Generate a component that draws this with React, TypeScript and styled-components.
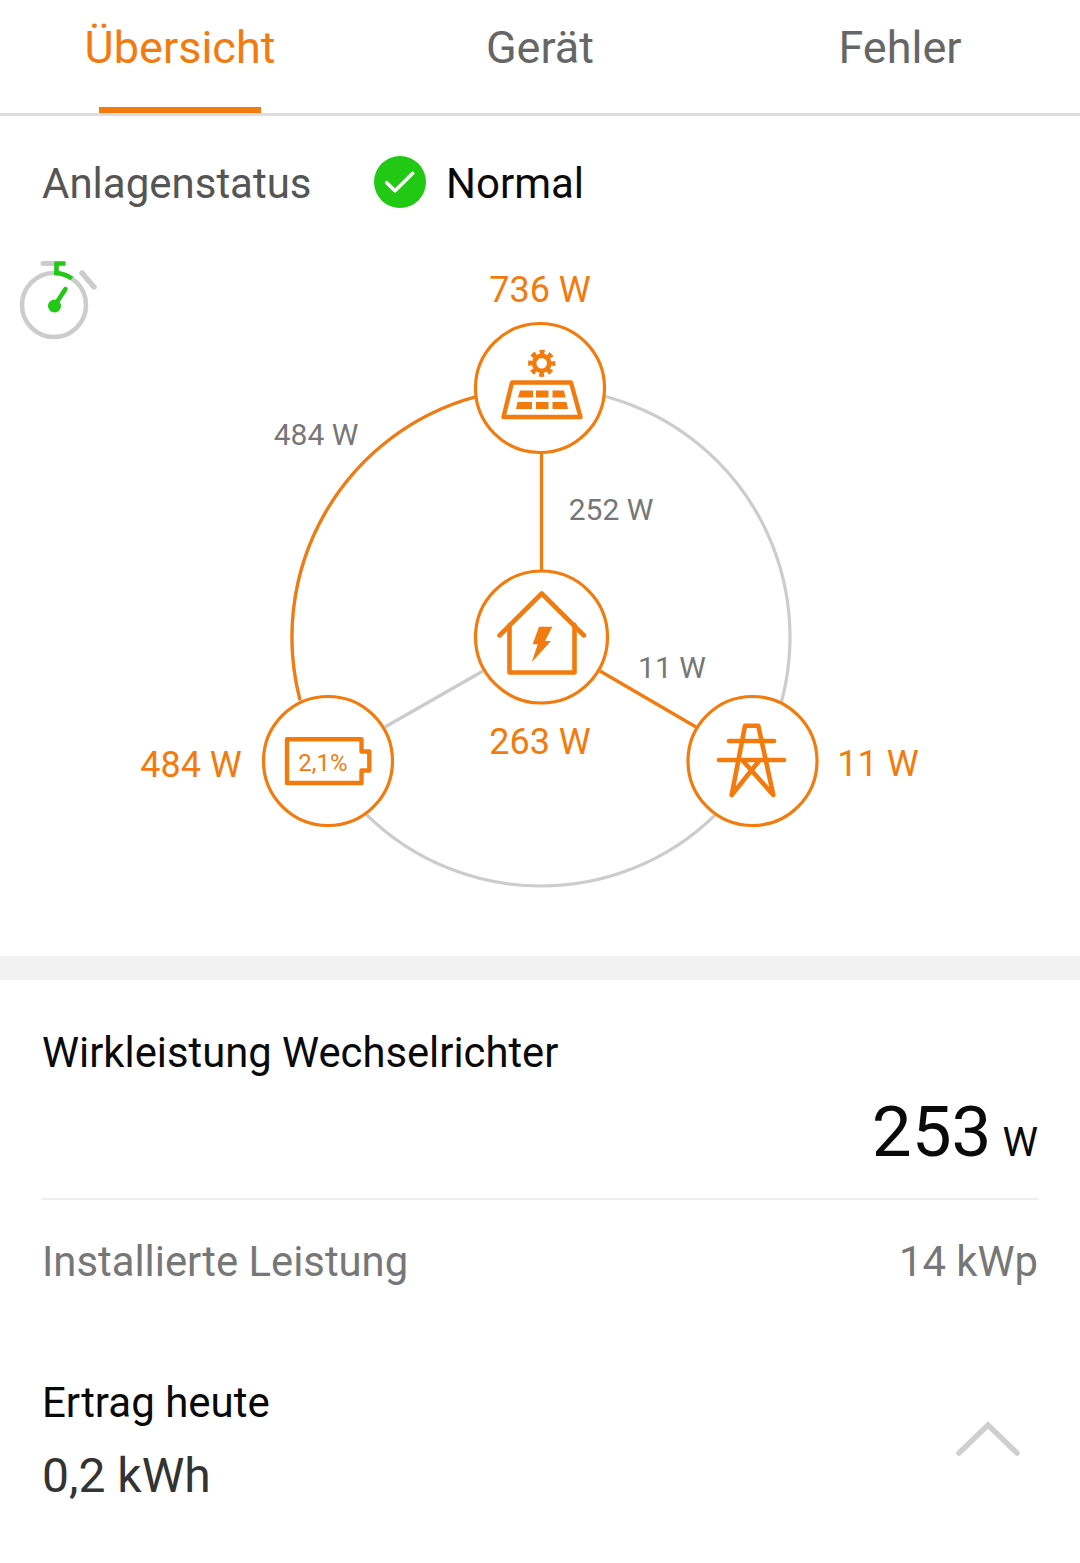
import * as React from 'react';
import styled, { createGlobalStyle } from 'styled-components';

const ORANGE = '#f37b0e';
const GREEN = '#21c814';
const GRAY_LINE = '#cccccc';

const GlobalStyle = createGlobalStyle`
  html, body {
    margin: 0;
    padding: 0;
    background: #fff;
    font-family: Roboto, "Noto Sans", sans-serif;
  }
`;

const Page = styled.div`
  width: 1080px;
  height: 1563px;
  overflow: hidden;
  background: #fff;
`;

/*************************************************************************/

const TabBar = styled.div`
  display: grid;
  grid-template-columns: repeat(3, 1fr);
  height: 113px;
  border-bottom: 3px solid #dddddd;
`;

const Tab = styled.div<{ $active?: boolean }>`
  display: flex;
  justify-content: center;
  position: relative;
  padding-top: 22px;
  font-size: 45px;
  line-height: 52px;
  color: ${p => (p.$active ? ORANGE : '#666666')};
`;

const TabMark = styled.div`
  position: absolute;
  left: 99px;
  bottom: 0;
  width: 162px;
  height: 6px;
  background: ${ORANGE};
`;

const StatusRow = styled.div`
  display: flex;
  align-items: center;
  height: 134px;
  padding-left: 42px;
`;

const StatusLabel = styled.div`
  font-size: 42px;
  color: #555555;
  width: 332px;
`;

const StatusBadge = styled.svg`
  display: block;
  width: 52px;
  height: 52px;
  margin-top: -2px;
`;

const StatusValue = styled.div`
  font-size: 42px;
  color: #0a0a0a;
  margin-left: 20px;
`;

const Diagram = styled.div`
  position: relative;
  height: 706px;
`;

const DiagramArt = styled.svg`
  display: block;
  width: 1080px;
  height: 706px;
`;

// value labels sit on the drawing, so they are placed by page coordinates
const FlowLabel = styled.div<{ $x: number; $y: number; $node?: boolean }>`
  position: absolute;
  left: ${p => p.$x}px;
  top: ${p => p.$y - 250 - 19}px;
  height: 40px;
  line-height: 40px;
  transform: translateX(-50%);
  white-space: nowrap;
  font-size: ${p => (p.$node ? 36 : 30)}px;
  color: ${p => (p.$node ? ORANGE : '#777777')};
`;

const Band = styled.div`
  height: 24px;
  background: #f2f2f2;
`;

const Details = styled.div`
  padding: 0 42px;
`;

const PowerTitle = styled.div`
  padding-top: 48px;
  font-size: 41.75px;
  line-height: 50px;
  color: #0a0a0a;
`;

const PowerValue = styled.div`
  display: flex;
  justify-content: flex-end;
  align-items: baseline;
  gap: 11px;
  height: 120px;
  line-height: 108px;
  font-size: 71px;
  color: #0a0a0a;
  border-bottom: 2px solid #eeeeee;
`;

const PowerUnit = styled.span`
  font-size: 40px;
`;

const InfoRow = styled.div`
  display: flex;
  justify-content: space-between;
  padding-top: 37px;
  font-size: 41.8px;
  line-height: 50px;
  color: #777777;
`;

const YieldRow = styled.div`
  display: flex;
  justify-content: space-between;
  align-items: center;
  padding-top: 91px;
`;

const YieldTitle = styled.div`
  font-size: 42px;
  line-height: 50px;
  color: #0a0a0a;
`;

const YieldValue = styled.div`
  margin-top: 21px;
  font-size: 48px;
  line-height: 54px;
  color: #333333;
`;

const Chevron = styled.svg`
  display: block;
  width: 64px;
  height: 36px;
  margin-right: 18px;
  margin-bottom: 3px;
`;

/*************************************************************************/

const StatusCheck = () => (
  <StatusBadge viewBox="0 0 52 52">
    <circle cx="26" cy="26" r="26" fill={GREEN} />
    <path d="M12.7 26.7L21 34.7L38.7 17.3" fill="none" stroke="#fff" strokeWidth="3.6" strokeLinecap="round" strokeLinejoin="round" />
  </StatusBadge>
);

const Timer = () => (
  <g>
    <circle cx="54" cy="305" r="32" fill="none" stroke={GRAY_LINE} strokeWidth="4.5" />
    <path d="M43 263.5H55" stroke={GRAY_LINE} strokeWidth="5" strokeLinecap="round" />
    <path d="M82 273L94 287" stroke={GRAY_LINE} strokeWidth="5.5" strokeLinecap="round" />
    <path d="M54.5 263.5H65.5M56.5 263V274" stroke={GREEN} strokeWidth="4.6" fill="none" />
    <path d="M54 273A32 32 0 0 1 72 278.5" fill="none" stroke={GREEN} strokeWidth="4.5" />
    <circle cx="54.5" cy="306" r="6.5" fill={GREEN} />
    <path d="M55 305L65.5 289" stroke={GREEN} strokeWidth="4.5" strokeLinecap="round" />
  </g>
);

const SolarIcon = () => (
  <g fill="none" stroke={ORANGE} strokeLinejoin="round">
    <circle cx="541.7" cy="363.3" r="7.6" strokeWidth="4.6" />
    <circle cx="541.7" cy="363.3" r="11" strokeWidth="5.2" strokeDasharray="4.8 3.84" strokeDashoffset="2.4" />
    <path d="M512 382.5H571L580.5 417H503.5Z" strokeWidth="4.4" />
    <g fill={ORANGE} stroke="none">
      <path d="M520 390.5H533V397.5H518Z" />
      <path d="M536 390.5H548.5V397.5H536Z" />
      <path d="M552.5 390.5H564L565.5 397.5H552.5Z" />
      <path d="M517.5 402H532V409H516Z" />
      <path d="M536 402H548.5V409H536Z" />
      <path d="M552.5 402H566.5L568 409H552.5Z" />
    </g>
  </g>
);

const HouseIcon = () => (
  <g fill="none" stroke={ORANGE} strokeWidth="4.6" strokeLinecap="round" strokeLinejoin="round">
    <path d="M499.5 635.5L541.7 593.5L584 635.5" />
    <path d="M509.5 625V672.5H574.5V625" />
    <path d="M539 626.7H552.3L545 641H551L531.7 662.3L537.7 644.3H532.7Z" fill={ORANGE} stroke="none" />
  </g>
);

const BatteryIcon = () => (
  <g>
    <path
      d="M287 739.2H361.5V751.5H369.3V770.5H361.5V783H287Z"
      fill="none"
      stroke={ORANGE}
      strokeWidth="4.4"
      strokeLinejoin="round"
    />
    <text x="323" y="770.5" textAnchor="middle" fontSize="24" fill={ORANGE} fontFamily="Roboto, sans-serif">
      2,1%
    </text>
  </g>
);

const PylonIcon = () => (
  <g fill="none" stroke={ORANGE} strokeWidth="4.6" strokeLinecap="round" strokeLinejoin="round">
    <path d="M731.7 795L745 725.7H758.3L773.3 795L743.5 761.5M731.7 795L758.5 761.5" />
    <path d="M729 741H774" />
    <path d="M719 760H784" />
  </g>
);

const Node = ({ x, y, r, children }: { x: number; y: number; r: number; children: React.ReactNode }) => (
  <g>
    <circle cx={x} cy={y} r={r} fill="#fff" stroke={ORANGE} strokeWidth="3.2" />
    {children}
  </g>
);

const EnergyFlow = () => (
  <DiagramArt viewBox="0 250 1080 706">
    <Timer />
    <circle cx="541" cy="637" r="249" fill="none" stroke={GRAY_LINE} strokeWidth="3.2" />
    <path d="M300 700A249 249 0 0 1 475 397" fill="none" stroke={ORANGE} strokeWidth="3.2" />
    <path d="M483 671L385 727" stroke={GRAY_LINE} strokeWidth="3.2" />
    <path d="M541.5 453V572" stroke={ORANGE} strokeWidth="3.2" />
    <path d="M600 671L696 727" stroke={ORANGE} strokeWidth="3.2" />
    <Node x={540} y={388} r={64.5}>
      <SolarIcon />
    </Node>
    <Node x={541.5} y={637} r={66}>
      <HouseIcon />
    </Node>
    <Node x={328} y={761} r={64.5}>
      <BatteryIcon />
    </Node>
    <Node x={752.5} y={761} r={64.5}>
      <PylonIcon />
    </Node>
  </DiagramArt>
);

export default function App() {
  return (
    <Page>
      <GlobalStyle />
      <TabBar>
        <Tab $active>
          Übersicht
          <TabMark />
        </Tab>
        <Tab>Gerät</Tab>
        <Tab>Fehler</Tab>
      </TabBar>
      <StatusRow>
        <StatusLabel>Anlagenstatus</StatusLabel>
        <StatusCheck />
        <StatusValue>Normal</StatusValue>
      </StatusRow>
      <Diagram>
        <EnergyFlow />
        <FlowLabel $node $x={540} $y={289}>736 W</FlowLabel>
        <FlowLabel $x={316} $y={434}>484 W</FlowLabel>
        <FlowLabel $x={611} $y={509}>252 W</FlowLabel>
        <FlowLabel $x={672} $y={667}>11 W</FlowLabel>
        <FlowLabel $node $x={540} $y={741}>263 W</FlowLabel>
        <FlowLabel $node $x={191} $y={764}>484 W</FlowLabel>
        <FlowLabel $node $x={878} $y={763}>11 W</FlowLabel>
      </Diagram>
      <Band />
      <Details>
        <PowerTitle>Wirkleistung Wechselrichter</PowerTitle>
        <PowerValue>
          253 <PowerUnit>W</PowerUnit>
        </PowerValue>
        <InfoRow>
          <span>Installierte Leistung</span>
          <span>14 kWp</span>
        </InfoRow>
        <YieldRow>
          <div>
            <YieldTitle>Ertrag heute</YieldTitle>
            <YieldValue>0,2 kWh</YieldValue>
          </div>
          <Chevron viewBox="0 0 64 36">
            <path d="M3 32L32 4L61 32" fill="none" stroke="#cfcfcf" strokeWidth="5.5" strokeLinecap="round" />
          </Chevron>
        </YieldRow>
      </Details>
    </Page>
  );
}
